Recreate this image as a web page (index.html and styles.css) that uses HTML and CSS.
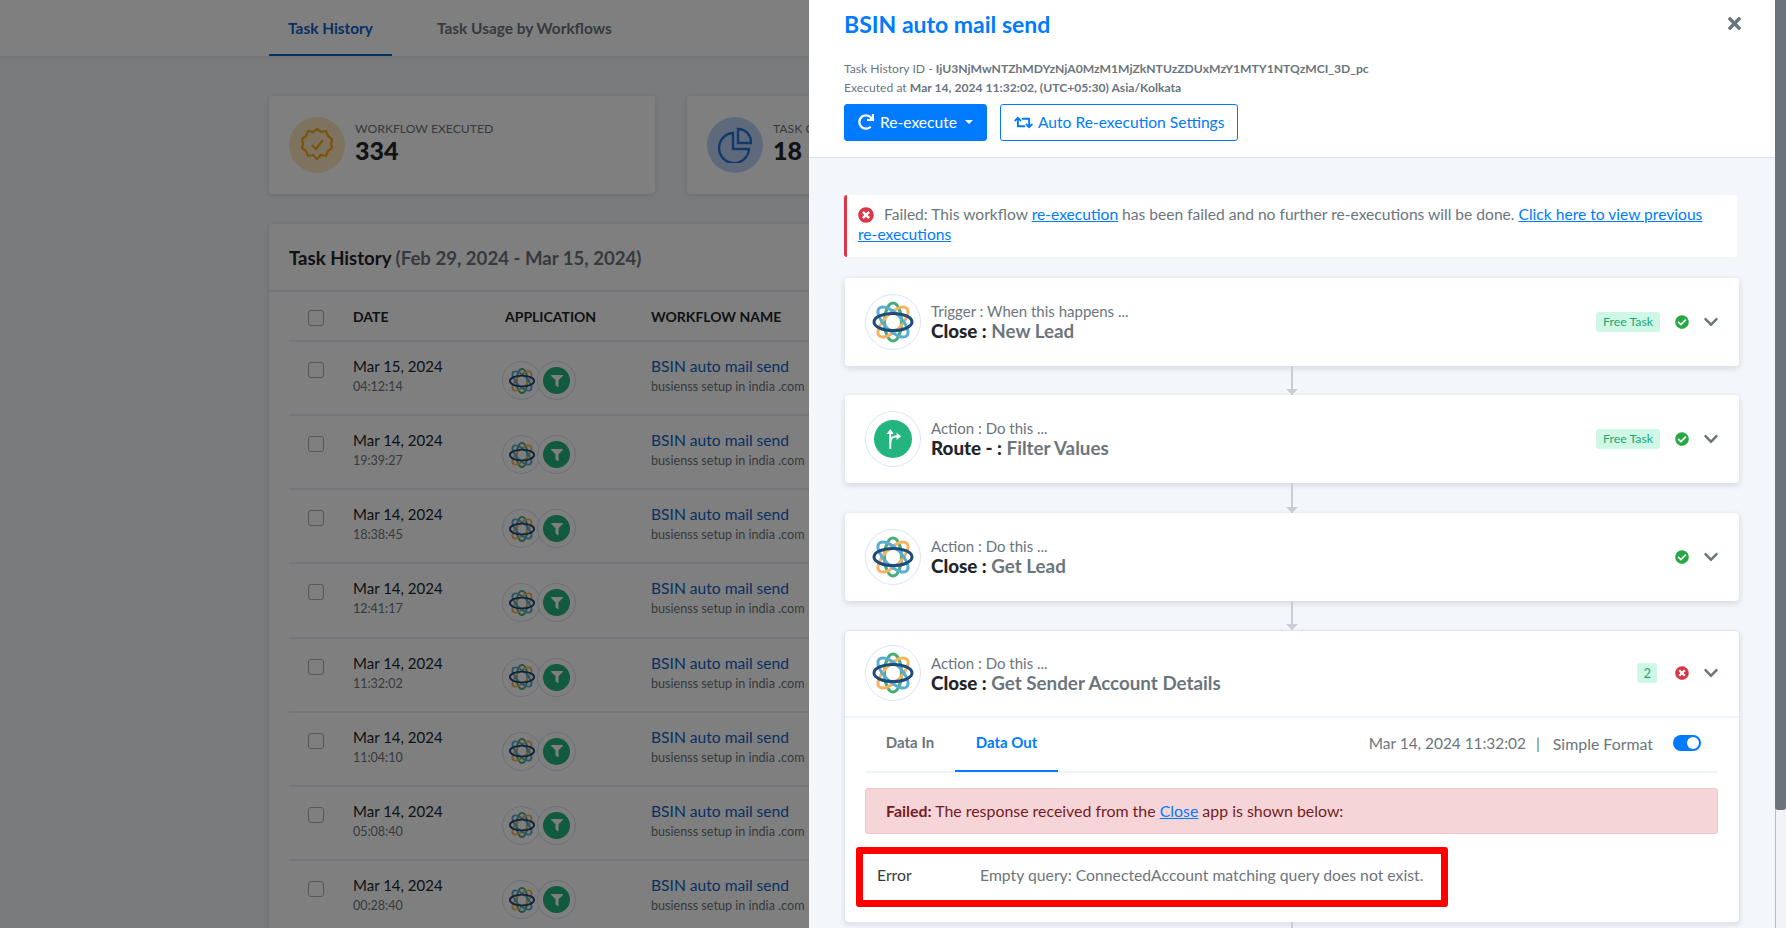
FILE: index.html
```html
<!DOCTYPE html>
<html>
<head>
  <meta charset='UTF-8'>
  <meta name='viewport' content='width=device-width, initial-scale=1.0'>
  <title>Task History</title>
  <link rel="stylesheet" href="styles.css">
</head>
<body>
  <!-- Shared icons -->
  <svg class='icon-defs' aria-hidden='true'>
    <symbol id='logo' viewBox='0 0 44 44'>
      <g fill='none' stroke-width='3'>
        <ellipse cx='22' cy='22' rx='8.5' ry='19' stroke='#45ad78'/>
        <ellipse cx='22' cy='22' rx='8.5' ry='19.5' stroke='#f5b45f' transform='rotate(45 22 22)'/>
        <ellipse cx='22' cy='22' rx='8.5' ry='19.5' stroke='#58aed2' transform='rotate(-45 22 22)'/>
        <ellipse cx='22' cy='22' rx='19' ry='8.5' stroke='#1f4a7c'/>
      </g>
    </symbol>
    <symbol id='check-circle' viewBox='0 0 512 512'>
      <path d='M504 256c0 136.967-111.033 248-248 248S8 392.967 8 256 119.033 8 256 8s248 111.033 248 248zM227.314 387.314l184-184c6.248-6.248 6.248-16.379 0-22.627l-22.627-22.627c-6.248-6.249-16.379-6.249-22.628 0L216 308.118l-70.059-70.059c-6.248-6.248-16.379-6.248-22.628 0l-22.627 22.627c-6.248 6.248-6.248 16.379 0 22.627l104 104c6.249 6.25 16.379 6.25 22.628.001z'/>
    </symbol>
    <symbol id='times-circle' viewBox='0 0 512 512'>
      <path d='M256 8C119 8 8 119 8 256s111 248 248 248 248-111 248-248S393 8 256 8zm121.6 313.1c4.7 4.7 4.7 12.3 0 17L338 377.6c-4.7 4.7-12.3 4.7-17 0L256 312l-65.1 65.6c-4.7 4.7-12.3 4.7-17 0L134.4 338c-4.7-4.7-4.7-12.3 0-17l65.6-65-65.6-65.1c-4.7-4.7-4.7-12.3 0-17l39.6-39.6c4.7-4.7 12.3-4.7 17 0l65 65.7 65.1-65.6c4.7-4.7 12.3-4.7 17 0l39.6 39.6c4.7 4.7 4.7 12.3 0 17L312 256l65.6 65.1z'/>
    </symbol>
    <symbol id='chevron' viewBox='0 0 448 512'>
      <path d='M207.029 381.476L12.686 187.132c-9.373-9.373-9.373-24.569 0-33.941l22.667-22.667c9.357-9.357 24.522-9.375 33.901-.04L224 284.505l154.745-154.021c9.379-9.335 24.544-9.317 33.901.04l22.667 22.667c9.373 9.373 9.373 24.569 0 33.941L240.971 381.476c-9.373 9.372-24.569 9.372-33.942 0z'/>
    </symbol>
    <symbol id='filter' viewBox='0 0 512 512'>
      <path d='M487.976 0H24.028C2.71 0-8.047 25.866 7.058 40.971L192 225.941V432c0 7.831 3.821 15.17 10.237 19.662l80 55.98C298.02 518.69 320 507.493 320 487.98V225.941l184.947-184.97C520.021 25.896 509.338 0 487.976 0z'/>
    </symbol>
  </svg>

  <!-- Page behind the panel -->
  <div class='page'>
    <div class='tabs-bar'>
      <a class='page-tab active'>Task History</a>
      <a class='page-tab'>Task Usage by Workflows</a>
    </div>
    <div class='page-content'>
      <div class='stats'>
        <div class='stat-card'>
          <div class='stat-icon stat-orange'>
            <svg viewBox='0 0 32 36' width='32' height='36' fill='none' stroke='#f5a623' stroke-width='2.2'>
              <path d='M16 2l4 3 5-1 2 5 4 3-1 5 1 4-4 3-2 5-5-1-4 4-4-4-5 1-2-5-4-3 1-4-1-5 4-3 2-5 5 1z'/>
              <path d='M11 18l4 4 7-9'/>
            </svg>
          </div>
          <div>
            <div class='stat-label'>WORKFLOW EXECUTED</div>
            <div class='stat-value'>334</div>
          </div>
        </div>
        <div class='stat-card'>
          <div class='stat-icon stat-blue'>
            <svg viewBox='0 0 34 36' width='34' height='36' fill='none' stroke='#2a70d8' stroke-width='2.4'>
              <path d='M15 6a15 15 0 1 0 16 16H15z'/>
              <path d='M20 2a13 13 0 0 1 13 14H20z'/>
            </svg>
          </div>
          <div>
            <div class='stat-label'>TASK CONSUMED</div>
            <div class='stat-value'>18</div>
          </div>
        </div>
      </div>

      <div class='history-card'>
        <div class='history-title'>Task History <span>(Feb 29, 2024 - Mar 15, 2024)</span></div>
        <div class='history-table'>
          <div class='history-row history-head'>
            <span class='checkbox'></span>
            <span class='col-date'>DATE</span>
            <span class='col-app'>APPLICATION</span>
            <span class='col-name'>WORKFLOW NAME</span>
          </div>
          <div class='history-row'>
            <span class='checkbox'></span>
            <div class='col-date'><div class='row-date'>Mar 15, 2024</div><div class='row-time'>04:12:14</div></div>
            <div class='col-app'><span class='app-dot'><svg width='28' height='28'><use href='#logo'/></svg></span><span class='app-dot'><span class='filter-dot'><svg width='12' height='12'><use href='#filter'/></svg></span></span></div>
            <div class='col-name'><a class='row-link'>BSIN auto mail send</a><div class='row-sub'>busienss setup in india .com</div></div>
          </div>
          <div class='history-row'>
            <span class='checkbox'></span>
            <div class='col-date'><div class='row-date'>Mar 14, 2024</div><div class='row-time'>19:39:27</div></div>
            <div class='col-app'><span class='app-dot'><svg width='28' height='28'><use href='#logo'/></svg></span><span class='app-dot'><span class='filter-dot'><svg width='12' height='12'><use href='#filter'/></svg></span></span></div>
            <div class='col-name'><a class='row-link'>BSIN auto mail send</a><div class='row-sub'>busienss setup in india .com</div></div>
          </div>
          <div class='history-row'>
            <span class='checkbox'></span>
            <div class='col-date'><div class='row-date'>Mar 14, 2024</div><div class='row-time'>18:38:45</div></div>
            <div class='col-app'><span class='app-dot'><svg width='28' height='28'><use href='#logo'/></svg></span><span class='app-dot'><span class='filter-dot'><svg width='12' height='12'><use href='#filter'/></svg></span></span></div>
            <div class='col-name'><a class='row-link'>BSIN auto mail send</a><div class='row-sub'>busienss setup in india .com</div></div>
          </div>
          <div class='history-row'>
            <span class='checkbox'></span>
            <div class='col-date'><div class='row-date'>Mar 14, 2024</div><div class='row-time'>12:41:17</div></div>
            <div class='col-app'><span class='app-dot'><svg width='28' height='28'><use href='#logo'/></svg></span><span class='app-dot'><span class='filter-dot'><svg width='12' height='12'><use href='#filter'/></svg></span></span></div>
            <div class='col-name'><a class='row-link'>BSIN auto mail send</a><div class='row-sub'>busienss setup in india .com</div></div>
          </div>
          <div class='history-row'>
            <span class='checkbox'></span>
            <div class='col-date'><div class='row-date'>Mar 14, 2024</div><div class='row-time'>11:32:02</div></div>
            <div class='col-app'><span class='app-dot'><svg width='28' height='28'><use href='#logo'/></svg></span><span class='app-dot'><span class='filter-dot'><svg width='12' height='12'><use href='#filter'/></svg></span></span></div>
            <div class='col-name'><a class='row-link'>BSIN auto mail send</a><div class='row-sub'>busienss setup in india .com</div></div>
          </div>
          <div class='history-row'>
            <span class='checkbox'></span>
            <div class='col-date'><div class='row-date'>Mar 14, 2024</div><div class='row-time'>11:04:10</div></div>
            <div class='col-app'><span class='app-dot'><svg width='28' height='28'><use href='#logo'/></svg></span><span class='app-dot'><span class='filter-dot'><svg width='12' height='12'><use href='#filter'/></svg></span></span></div>
            <div class='col-name'><a class='row-link'>BSIN auto mail send</a><div class='row-sub'>busienss setup in india .com</div></div>
          </div>
          <div class='history-row'>
            <span class='checkbox'></span>
            <div class='col-date'><div class='row-date'>Mar 14, 2024</div><div class='row-time'>05:08:40</div></div>
            <div class='col-app'><span class='app-dot'><svg width='28' height='28'><use href='#logo'/></svg></span><span class='app-dot'><span class='filter-dot'><svg width='12' height='12'><use href='#filter'/></svg></span></span></div>
            <div class='col-name'><a class='row-link'>BSIN auto mail send</a><div class='row-sub'>busienss setup in india .com</div></div>
          </div>
          <div class='history-row'>
            <span class='checkbox'></span>
            <div class='col-date'><div class='row-date'>Mar 14, 2024</div><div class='row-time'>00:28:40</div></div>
            <div class='col-app'><span class='app-dot'><svg width='28' height='28'><use href='#logo'/></svg></span><span class='app-dot'><span class='filter-dot'><svg width='12' height='12'><use href='#filter'/></svg></span></span></div>
            <div class='col-name'><a class='row-link'>BSIN auto mail send</a><div class='row-sub'>busienss setup in india .com</div></div>
          </div>
        </div>
      </div>
    </div>
  </div>

  <div class='backdrop'></div>

  <!-- Side panel -->
  <div class='panel'>
    <div class='panel-main'>
      <div class='panel-header'>
        <div class='panel-title-row'>
          <h1>BSIN auto mail send</h1>
          <svg class='panel-close' viewBox='0 0 352 512' width='13' height='19'><path d='M242.72 256l100.07-100.07c12.28-12.28 12.28-32.19 0-44.48l-22.24-22.24c-12.28-12.28-32.19-12.28-44.48 0L176 189.28 75.93 89.21c-12.28-12.28-32.19-12.28-44.48 0L9.21 111.45c-12.28 12.28-12.28 32.19 0 44.48L109.28 256 9.21 356.07c-12.28 12.28-12.28 32.19 0 44.48l22.24 22.24c12.28 12.28 32.2 12.28 44.48 0L176 322.72l100.07 100.07c12.28 12.28 32.2 12.28 44.48 0l22.24-22.24c12.28-12.28 12.28-32.19 0-44.48L242.72 256z'/></svg>
        </div>
        <div class='meta'>Task History ID - <strong>IjU3NjMwNTZhMDYzNjA0MzM1MjZkNTUzZDUxMzY1MTY1NTQzMCI_3D_pc</strong></div>
        <div class='meta'>Executed at <strong>Mar 14, 2024 11:32:02, (UTC+05:30) Asia/Kolkata</strong></div>
        <div class='header-buttons'>
          <button class='btn btn-primary'>
            <svg viewBox='0 0 512 512' width='16' height='16'><path d='M500.33 0h-47.41a12 12 0 0 0-12 12.57l4 82.76A247.42 247.42 0 0 0 256 8C119.34 8 7.9 119.53 8 256.19 8.1 393.07 119.1 504 256 504a247.1 247.1 0 0 0 166.18-63.91 12 12 0 0 0 .48-17.43l-34-34a12 12 0 0 0-16.38-.55A176 176 0 1 1 402.1 157.8l-101.53-4.87a12 12 0 0 0-12.57 12v47.41a12 12 0 0 0 12 12h200.33a12 12 0 0 0 12-12V12a12 12 0 0 0-12-12z'/></svg>
            Re-execute <span class='caret'></span>
          </button>
          <button class='btn btn-outline'>
            <svg viewBox='0 0 640 512' width='19' height='15'><path d='M629.657 343.598L528.971 444.284c-9.373 9.372-24.568 9.372-33.941 0L394.343 343.598c-9.373-9.373-9.373-24.569 0-33.941l10.823-10.823c9.562-9.562 25.133-9.34 34.419.492L480 342.118V160H292.451a24.005 24.005 0 0 1-16.971-7.029l-16-16C244.361 121.851 255.069 96 276.451 96H520c13.255 0 24 10.745 24 24v222.118l40.416-42.792c9.285-9.831 24.856-10.054 34.419-.492l10.823 10.823c9.372 9.372 9.372 24.569-.001 33.941zm-265.138 15.431A23.999 23.999 0 0 0 347.548 352H160V169.881l40.416 42.792c9.286 9.831 24.856 10.054 34.419.491l10.822-10.822c9.373-9.373 9.373-24.569 0-33.941L144.971 67.716c-9.373-9.373-24.569-9.373-33.941 0L10.343 168.402c-9.373 9.373-9.373 24.569 0 33.941l10.822 10.822c9.562 9.562 25.133 9.34 34.419-.491L96 169.881V392c0 13.255 10.745 24 24 24h243.549c21.382 0 32.09-25.851 16.971-40.971l-16.001-16z'/></svg>
            Auto Re-execution Settings
          </button>
        </div>
      </div>

      <div class='panel-body'>
        <div class='fail-alert'>
          <svg class='icon-fail alert-icon' width='16' height='16'><use href='#times-circle'/></svg>
          <span>Failed: This workflow <a>re-execution</a> has been failed and no further re-executions will be done. <a>Click here to view previous <span class='nowrap'>re-executions</span></a></span>
        </div>

        <!-- Step 1 -->
        <div class='step'>
          <div class='step-head'>
            <span class='step-logo'><svg width='44' height='44'><use href='#logo'/></svg></span>
            <div class='step-text'>
              <div class='step-kind'>Trigger : When this happens ...</div>
              <div class='step-title'><b>Close :</b> New Lead</div>
            </div>
            <span class='free-badge'>Free Task</span>
            <svg class='icon-ok' width='14' height='14'><use href='#check-circle'/></svg>
            <svg class='icon-chevron' width='14' height='16'><use href='#chevron'/></svg>
          </div>
        </div>
        <div class='connector'></div>

        <!-- Step 2 -->
        <div class='step'>
          <div class='step-head'>
            <span class='step-logo'>
              <span class='route-dot'>
                <svg viewBox='0 0 20 24' width='18' height='22' fill='none' stroke='#fff' stroke-width='2.2'>
                  <path d='M7 23V5'/><path d='M3 6.5L7 1l4 5.500z' fill='#fff' stroke='none'/><path d='M7 16c0-5 3-7 8-7'/><path d='M14 5l5 4-5 4z' fill='#fff' stroke='none'/>
                </svg>
              </span>
            </span>
            <div class='step-text'>
              <div class='step-kind'>Action : Do this ...</div>
              <div class='step-title'><b>Route - :</b> Filter Values</div>
            </div>
            <span class='free-badge'>Free Task</span>
            <svg class='icon-ok' width='14' height='14'><use href='#check-circle'/></svg>
            <svg class='icon-chevron' width='14' height='16'><use href='#chevron'/></svg>
          </div>
        </div>
        <div class='connector'></div>

        <!-- Step 3 -->
        <div class='step'>
          <div class='step-head'>
            <span class='step-logo'><svg width='44' height='44'><use href='#logo'/></svg></span>
            <div class='step-text'>
              <div class='step-kind'>Action : Do this ...</div>
              <div class='step-title'><b>Close :</b> Get Lead</div>
            </div>
            <svg class='icon-ok' width='14' height='14'><use href='#check-circle'/></svg>
            <svg class='icon-chevron' width='14' height='16'><use href='#chevron'/></svg>
          </div>
        </div>
        <div class='connector'></div>

        <!-- Step 4 -->
        <div class='step step-open'>
          <div class='step-head step-head-open'>
            <span class='step-logo'><svg width='44' height='44'><use href='#logo'/></svg></span>
            <div class='step-text'>
              <div class='step-kind'>Action : Do this ...</div>
              <div class='step-title'><b>Close :</b> Get Sender Account Details</div>
            </div>
            <span class='free-badge count-badge'>2</span>
            <svg class='icon-fail' width='14' height='14'><use href='#times-circle'/></svg>
            <svg class='icon-chevron' width='14' height='16'><use href='#chevron'/></svg>
          </div>
          <div class='step-detail'>
            <div class='detail-tabs'>
              <a class='detail-tab'>Data In</a>
              <a class='detail-tab active'>Data Out</a>
              <div class='detail-right'>
                <span>Mar 14, 2024 11:32:02</span>
                <span class='pipe'>|</span>
                <span class='simple-label'>Simple Format</span>
                <span class='toggle'></span>
              </div>
            </div>
            <div class='failed-box'><b>Failed:</b> The response received from the <a>Close</a> app is shown below:</div>
            <div class='error-row'>
              <span class='error-key'>Error</span>
              <span class='error-value'>Empty query: ConnectedAccount matching query does not exist.</span>
            </div>
          </div>
        </div>
        <div class='connector connector-end'></div>
      </div>
    </div>
    <div class='scroll-track'><div class='scroll-thumb'></div></div>
  </div>
</body>
</html>
```

FILE: styles.css
```css
* { margin: 0; padding: 0; box-sizing: border-box; }
html, body { height: 100%; overflow: hidden; }
body { font-family: Lato, "Noto Sans", Arial, sans-serif; background: #f3f6fa; color: #212529; font-size: 15px; position: relative; }
a { cursor: pointer; }
.icon-defs { position: absolute; width: 0; height: 0; }
.nowrap { white-space: nowrap; }

/* page behind the panel */
.page { height: 100%; overflow: hidden; }
.tabs-bar { height: 56px; background: #fff; padding-left: 269px; display: flex; box-shadow: 0 1px 4px rgba(0,0,0,0.08); }
.page-tab { width: 123px; height: 56px; line-height: 56px; text-align: center; font-weight: 700; font-size: 15.4px; color: #6c757d; }
.page-tab.active { color: #0f62c4; border-bottom: 2px solid #0f62c4; }
.page-tab + .page-tab { width: auto; margin-left: 45px; }
.page-content { padding: 40px 0 0 269px; }
.stats { display: flex; gap: 32px; }
.stat-card { width: 386px; height: 98px; flex: none; background: #fff; border-radius: 4px; box-shadow: 0 1px 5px rgba(0,0,0,0.12); display: flex; align-items: center; gap: 10px; padding: 0 0 0 20px; }
.stat-card > div:last-child { margin-top: -5px; }
.stat-icon { width: 56px; height: 56px; border-radius: 50%; display: flex; align-items: center; justify-content: center; }
.stat-orange { background: #fbe6bf; }
.stat-blue { background: #bcd4f6; }
.stat-label { font-size: 12.2px; color: #6c757d; }
.stat-value { font-size: 25px; font-weight: 900; color: #212529; line-height: 28px; }
.history-card { width: 1100px; margin-top: 30px; background: #fff; border-radius: 4px; box-shadow: 0 1px 5px rgba(0,0,0,0.12); }
.history-title { height: 68px; line-height: 68px; padding-left: 20px; font-size: 18.6px; font-weight: 700; border-bottom: 2px solid #e6edf5; }
.history-title span { color: #6c757d; }
.history-table { padding: 0 20px; }
.history-row { display: flex; height: 74.15px; border-bottom: 2px solid #e6edf5; padding-left: 19px; align-items: center; }
.history-head { height: 50px; font-size: 14px; font-weight: 700; }
.history-head .checkbox { margin-top: 4px; }
.checkbox { width: 16px; height: 16px; border: 1px solid #a9b0b6; border-radius: 3px; background: #fff; flex: none; margin-right: 29px; }
.history-row:not(.history-head) .checkbox { margin-top: -16px; }
.col-date { width: 152px; flex: none; }
.history-row:not(.history-head) .col-date, .history-row:not(.history-head) .col-name { margin-top: -2px; }
.col-app { width: 146px; flex: none; display: flex; }
.history-row:not(.history-head) .col-app { margin: 5px 0 0 -3px; width: 149px; }
.row-date { font-size: 15px; line-height: 20px; }
.row-time { font-size: 12.5px; color: #6c757d; line-height: 22px; }
.row-link { color: #0f62c4; font-size: 15.6px; line-height: 20px; }
.row-sub { font-size: 12.6px; color: #6c757d; line-height: 22px; white-space: nowrap; }
.col-name { flex: none; }
.app-dot { width: 39px; height: 39px; border: 1px solid #d3e0f5; border-radius: 50%; background: #fff; display: flex; align-items: center; justify-content: center; margin-right: -4px; }
.filter-dot { width: 27px; height: 27px; border-radius: 50%; background: #24b47e; display: flex; align-items: center; justify-content: center; fill: #fff; }

.backdrop { position: absolute; inset: 0; background: rgba(0,0,0,0.5); }

/* side panel */
.panel { position: absolute; top: 0; right: 0; bottom: 0; width: 977px; display: flex; background: #f3f6fa; }
.panel-main { width: 966px; flex: none; overflow: hidden; }
.panel-header { height: 158px; background: #fff; border-bottom: 1px solid #d6e2f5; padding: 10px 34px 0 35px; }
.panel-title-row { display: flex; justify-content: space-between; align-items: center; height: 27px; margin-bottom: 22px; }
h1 { font-size: 23px; font-weight: 700; color: #007bff; }
.panel-close { fill: #6c757d; }
.meta { font-size: 12.15px; line-height: 19px; color: #6c757d; }
.meta strong { font-weight: 700; }
.header-buttons { display: flex; gap: 13px; margin-top: 7px; }
.btn { height: 37px; border-radius: 3px; font: inherit; font-size: 15.6px; display: flex; align-items: center; gap: 5px; padding: 0 13px 1px; border: 1px solid #007bff; }
.btn svg { fill: currentColor; }
.btn-primary { background: #007bff; color: #fff; gap: 6px; }
.btn-outline { background: #fff; color: #007bff; }
.caret { border-top: 4px solid #fff; border-left: 4px solid transparent; border-right: 4px solid transparent; margin-left: 2px; }

.panel-body { padding: 37px 36px 0 35px; }
.fail-alert { background: #fff; border-left: 3px solid #dc3545; border-radius: 3px; padding: 9px 20px 10px 11px; margin-right: 2px; font-size: 15.6px; line-height: 20px; color: #6c757d; height: 62px; margin-bottom: 21px; }
.fail-alert a { color: #007bff; text-decoration: underline; }
.alert-icon { vertical-align: -3px; margin-right: 6px; }
.icon-ok { fill: #28a745; flex: none; }
.icon-fail { fill: #dc3545; flex: none; }
.icon-chevron { fill: #6c757d; flex: none; margin-left: 15px; }

.step { margin-left: 1px; background: #fff; border-radius: 4px; box-shadow: 0 2px 6px rgba(50,70,100,0.18); }
.step-head { height: 88px; display: flex; align-items: center; padding: 0 21px 0 20px; }
.step-logo { width: 56px; height: 56px; flex: none; border: 1px solid #d9e5f8; border-radius: 50%; display: flex; align-items: center; justify-content: center; margin-right: 10px; }
.route-dot { width: 38px; height: 38px; border-radius: 50%; background: #24b47e; display: flex; align-items: center; justify-content: center; }
.step-text { flex: 1; padding-bottom: 2px; }
.step-kind { font-size: 15px; line-height: 20px; color: #6c757d; }
.step-title { font-size: 18.8px; line-height: 20px; font-weight: 700; color: #6c757d; }
.step-title b { color: #212529; }
.free-badge { background: #cff7e6; color: #1ba672; font-size: 12.3px; height: 20px; line-height: 20px; padding: 0 7px; border-radius: 3px; margin-right: 15px; }
.count-badge { padding: 0 6px; font-size: 13px; margin-right: 18px; }
.connector { width: 2px; height: 29.33px; background: #c9ced4; margin-left: 447px; position: relative; }
.connector::after { content: ""; position: absolute; left: -5px; bottom: 0; border-top: 6px solid #c9ced4; border-left: 6px solid transparent; border-right: 6px solid transparent; }
.connector-end::after { display: none; }

.step-open { margin-top: 1px; box-shadow: 0 0 0 1px #d9e5f8, 0 2px 6px rgba(50,70,100,0.18); }
.step-head-open { height: 87px; border-bottom: 2px solid #edf4fc; }
.step-open .step-text { padding-bottom: 0; }
.step-detail { padding: 0 21px 15px 20px; }
.detail-tabs { display: flex; align-items: center; height: 55px; border-bottom: 2px solid #edf4fc; color: #6c757d; }
.detail-tab { height: 55px; line-height: 51px; font-weight: 700; width: 90px; text-align: center; }
.detail-tab.active { width: 103px; color: #007bff; border-bottom: 2px solid #007bff; }
.detail-right { margin-left: auto; display: flex; align-items: center; margin-top: -2px; padding-right: 17px; font-size: 15.4px; }
.simple-label { font-size: 15.9px; }
.pipe { margin: 0 13px 0 10px; }
.toggle { width: 28px; height: 16px; border-radius: 8px; background: #007bff; margin-left: 20px; position: relative; }
.toggle::after { content: ""; position: absolute; right: 2px; top: 2px; width: 12px; height: 12px; border-radius: 50%; background: #fff; }
.failed-box { margin-top: 15px; height: 46px; line-height: 44px; padding-left: 20px; background: #f6d5d9; border: 1px solid #f1c6cb; border-radius: 3px; color: #721c24; font-size: 15.9px; }
.failed-box a { color: #007bff; text-decoration: underline; }
.error-row { display: flex; align-items: center; width: 592px; height: 60px; margin: 13px 0 0 -9px; border: 7px solid #f00; border-radius: 3px; padding: 0 0 4px 14px; font-size: 15.75px; }
.error-key { width: 103px; color: #343a40; }
.error-value { color: #6c757d; }

.scroll-track { width: 11px; flex: none; background: #f1f3f6; border-left: 1px solid #b8bcc0; }
.scroll-thumb { height: 810px; margin-left: -1px; background: #6c737a; border-radius: 0 0 3px 3px; }
```
